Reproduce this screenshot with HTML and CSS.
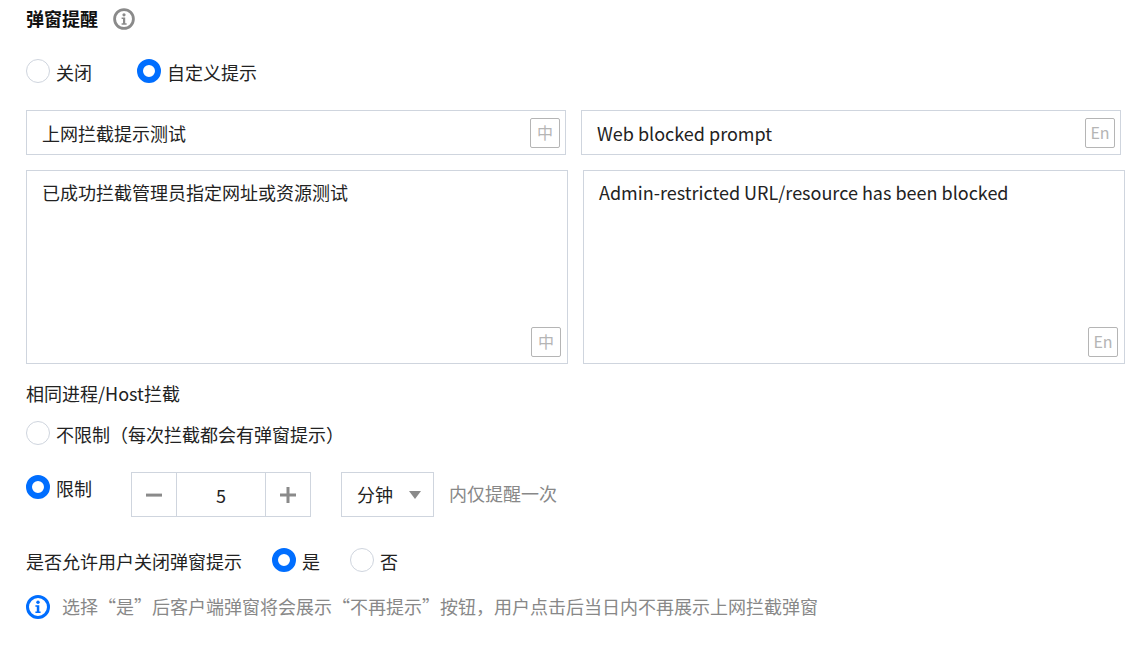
FILE: index.html
```html
<!DOCTYPE html>
<html lang="en">
<head>
    <meta charset="UTF-8">
    <title>弹窗提醒</title>
    <link rel="stylesheet" href="styles.css">
</head>
<body>
    <div class="page">
        <div class="title-row">
            <h2>弹窗提醒</h2>
            <svg class="tip-icon" width="22" height="22" viewBox="0 0 22 22">
                <circle cx="11" cy="11" r="9.4" fill="none" stroke="#8a8a8a" stroke-width="2.8"/>
                <circle cx="11" cy="6.8" r="1.6" fill="#8a8a8a"/>
                <path d="M8.6 9.4h3.6v5.8h1.4v1.5H8.6v-1.5H10v-4.3H8.6z" fill="#8a8a8a"/>
            </svg>
        </div>

        <div class="radio-row top-radios">
            <label class="radio"><span class="dot"></span>关闭</label>
            <label class="radio"><span class="dot on"></span>自定义提示</label>
        </div>

        <div class="input-row">
            <div class="field small left">上网拦截提示测试<span class="lang">中</span></div>
            <div class="field small right">Web blocked prompt<span class="lang">En</span></div>
        </div>

        <div class="input-row area-row">
            <div class="field area left">已成功拦截管理员指定网址或资源测试<span class="lang">中</span></div>
            <div class="field area right">Admin-restricted URL/resource has been blocked<span class="lang">En</span></div>
        </div>

        <div class="sub-title">相同进程/Host拦截</div>

        <label class="radio no-limit"><span class="dot"></span>不限制（每次拦截都会有弹窗提示）</label>

        <div class="limit-row">
            <label class="radio limit-radio"><span class="dot on"></span>限制</label>
            <div class="stepper">
                <div class="step-btn">
                    <svg width="16" height="16" viewBox="0 0 16 16"><path d="M0 6.6h16v3H0z" fill="#8a8a8a"/></svg>
                </div>
                <div class="step-value">5</div>
                <div class="step-btn">
                    <svg width="16" height="16" viewBox="0 0 16 16"><path d="M0 6.5h16v3H0zM6.5 0h3v16h-3z" fill="#8a8a8a"/></svg>
                </div>
            </div>
            <div class="select">分钟<span class="arrow"></span></div>
            <span class="muted">内仅提醒一次</span>
        </div>

        <div class="allow-row">
            <span class="allow-label">是否允许用户关闭弹窗提示</span>
            <label class="radio"><span class="dot on"></span>是</label>
            <label class="radio"><span class="dot"></span>否</label>
        </div>

        <div class="notice">
            <svg width="24" height="24" viewBox="0 0 24 24">
                <circle cx="12" cy="12" r="10.5" fill="none" stroke="#006eff" stroke-width="3"/>
                <circle cx="12" cy="7.2" r="1.7" fill="#006eff"/>
                <path d="M9.4 10.2h3.9v6.2h1.3V18H9.4v-1.6h1.4v-4.6H9.4z" fill="#006eff"/>
            </svg>
            <span class="muted">选择“是”后客户端弹窗将会展示“不再提示”按钮，用户点击后当日内不再展示上网拦截弹窗</span>
        </div>
    </div>
</body>
</html>
```

FILE: styles.css
```css
* {
    box-sizing: border-box;
    font-family: "Noto Sans CJK SC", "Noto Sans", sans-serif;
}

body {
    background-color: white;
    margin: 0;
    padding: 0;
    color: #222;
    font-size: 18px;
}

.page {
    padding: 8px 0 0 26px;
    width: 1143px;
}

.title-row {
    display: flex;
    align-items: center;
    height: 22px;
}

h2 {
    margin: 0;
    padding-bottom: 2px;
    font-size: 18px;
    line-height: 22px;
    font-weight: bold;
    color: #111;
}

.tip-icon {
    margin-left: 15px;
}

.radio {
    display: inline-flex;
    align-items: center;
    line-height: 24px;
}

/* the circles sit a little higher than the label text */
.dot {
    width: 24px;
    height: 24px;
    margin-right: 6px;
    margin-bottom: 2px;
    border: 1px solid #cfd5de;
    border-radius: 50%;
    background-color: white;
}

.dot.on {
    border: 6px solid #006eff;
}

.top-radios {
    display: flex;
    margin-top: 29px;
    gap: 45px;
}

.input-row {
    display: flex;
    margin-top: 25px;
}

.area-row {
    margin-top: 15px;
}

.field {
    position: relative;
    border: 1px solid #cfd5de;
    padding-left: 15px;
}

.field.small {
    width: 540px;
    height: 45px;
    line-height: 44px;
}

.field.small.right {
    margin-left: 15px;
}

.field.area {
    width: 542px;
    height: 194px;
    padding-top: 9px;
    line-height: 24px;
}

.field.area.right {
    margin-left: 15px;
}

.lang {
    position: absolute;
    right: 5px;
    bottom: 6px;
    width: 30px;
    height: 30px;
    border: 1px solid #b5b5b5;
    border-radius: 2px;
    color: #b5b5b5;
    font-size: 16px;
    line-height: 26px;
    text-align: center;
}

.field.area .lang {
    right: 6px;
}

.sub-title {
    margin-top: 17px;
    line-height: 24px;
}

.no-limit {
    display: flex;
    margin-top: 16px;
}

.limit-row {
    display: flex;
    align-items: flex-start;
    margin-top: 25px;
}

.limit-radio {
    margin-top: 3px;
    width: 105px;
}

.stepper {
    display: flex;
    width: 180px;
    height: 45px;
    border: 1px solid #cfd5de;
}

.step-btn {
    display: flex;
    align-items: center;
    justify-content: center;
    width: 44px;
}

.step-value {
    flex: 1;
    border-left: 1px solid #cfd5de;
    border-right: 1px solid #cfd5de;
    text-align: center;
    line-height: 44px;
}

.select {
    display: flex;
    align-items: center;
    width: 93px;
    height: 45px;
    margin-left: 30px;
    padding-left: 15px;
    padding-bottom: 2px;
    border: 1px solid #cfd5de;
}

.arrow {
    margin-left: 16px;
    margin-top: 2px;
    border-top: 8px solid #8a8a8a;
    border-left: 6px solid transparent;
    border-right: 6px solid transparent;
}

.muted {
    color: #888;
}

.limit-row .muted {
    margin-left: 15px;
    line-height: 42px;
}

.allow-row {
    display: flex;
    align-items: flex-start;
    margin-top: 31px;
    height: 26px;
}

.allow-label {
    width: 246px;
    line-height: 26px;
}

.allow-row .radio {
    width: 78px;
}

.notice {
    display: flex;
    align-items: flex-start;
    gap: 12px;
    margin-top: 21px;
}

.notice .muted {
    line-height: 22px;
}
```
